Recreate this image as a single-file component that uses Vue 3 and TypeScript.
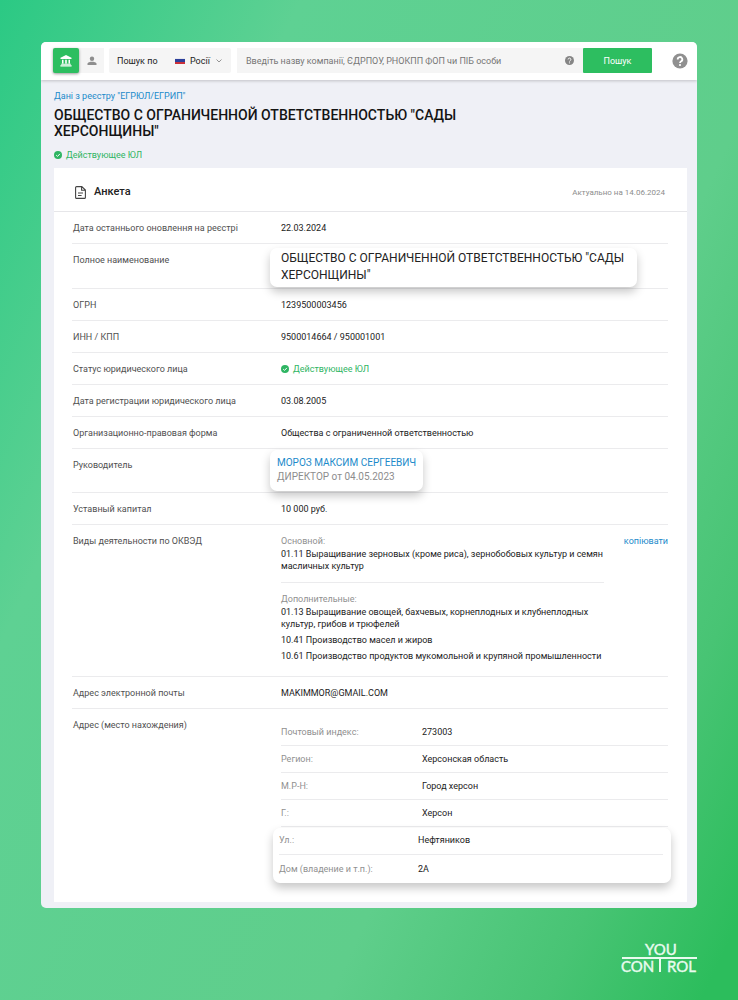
<script setup lang="ts">
import { ref } from 'vue'

interface Row {
  label: string
  value: string
  kind?: 'name' | 'status' | 'head'
}

const query = ref('')
const country = ref('Росії')

const companyName = 'ОБЩЕСТВО С ОГРАНИЧЕННОЙ ОТВЕТСТВЕННОСТЬЮ "САДЫ ХЕРСОНЩИНЫ"'

const rows: Row[] = [
  { label: 'Дата останнього оновлення на реєстрі', value: '22.03.2024' },
  { label: 'Полное наименование', value: companyName, kind: 'name' },
  { label: 'ОГРН', value: '1239500003456' },
  { label: 'ИНН / КПП', value: '9500014664 / 950001001' },
  { label: 'Статус юридического лица', value: 'Действующее ЮЛ', kind: 'status' },
  { label: 'Дата регистрации юридического лица', value: '03.08.2005' },
  { label: 'Организационно-правовая форма', value: 'Общества с ограниченной ответственностью' },
  { label: 'Руководитель', value: 'МОРОЗ МАКСИМ СЕРГЕЕВИЧ', kind: 'head' },
  { label: 'Уставный капитал', value: '10 000 руб.' },
]

const extraActivities: string[] = [
  '01.13 Выращивание овощей, бахчевых, корнеплодных и клубнеплодных культур, грибов и трюфелей',
  '10.41 Производство масел и жиров',
  '10.61 Производство продуктов мукомольной и крупяной промышленности',
]

const address: [string, string][] = [
  ['Почтовый индекс:', '273003'],
  ['Регион:', 'Херсонская область'],
  ['М.Р-Н:', 'Город херсон'],
  ['Г.:', 'Херсон'],
]

const street: [string, string][] = [
  ['Ул.:', 'Нефтяников'],
  ['Дом (владение и т.п.):', '2А'],
]
</script>

<template>
  <div class="page">
    <main class="window">
      <header class="topbar">
        <div class="modes">
          <button class="mode active" type="button" aria-label="Компанії">
            <svg width="12" height="12" viewBox="0 0 12 12" fill="currentColor">
              <path d="M6 0 11.500 2.800V4H.5V2.800zM2 4.800h1.500v3.600H2zM5.200 4.800h1.600v3.600H5.200zM8.500 4.800H10v3.600H8.500zM1.200 8.800h9.600v.9H1.200zM.4 10.300h11.200v1.300H.4z" />
            </svg>
          </button>
          <button class="mode" type="button" aria-label="Особи">
            <svg width="10" height="10" viewBox="0 0 10 10" fill="currentColor">
              <circle cx="5" cy="2.700" r="2.200" />
              <path d="M.5 9V7.700C.5 6.300 3.400 5.700 5 5.700s4.500.6 4.500 2V9z" />
            </svg>
          </button>
        </div>
        <div class="scope">
          <label for="country">Пошук по</label>
          <span class="flag" aria-hidden="true"></span>
          <select id="country" v-model="country">
            <option>Росії</option>
          </select>
          <svg width="6" height="4" viewBox="0 0 6 4" fill="none" stroke="#8a8a8a" stroke-width="0.900">
            <path d="M.5.5 3 3 5.500.5" />
          </svg>
        </div>
        <form class="search" @submit.prevent>
          <div class="field">
            <input
              v-model="query"
              type="text"
              aria-label="Пошук"
              placeholder="Введіть назву компанії, ЄДРПОУ, РНОКПП ФОП чи ПІБ особи"
            />
            <svg width="9" height="9" viewBox="0 0 16 16">
              <circle cx="8" cy="8" r="8" fill="#858585" />
              <path d="M5.500 6.200a2.500 2.500 0 1 1 3.700 2.200C8.300 8.900 8 9.300 8 10" fill="none" stroke="#f5f5f5" stroke-width="1.700" />
              <circle cx="8" cy="12.200" r="1.100" fill="#f5f5f5" />
            </svg>
          </div>
          <button class="submit" type="submit">Пошук</button>
        </form>
        <button class="help" type="button" aria-label="Довідка">
          <svg width="16" height="16" viewBox="0 0 16 16">
            <circle cx="8" cy="8" r="7.600" fill="#909090" />
            <path d="M5.700 6.400a2.300 2.300 0 1 1 3.500 1.900C8.300 8.900 8 9.200 8 10" fill="none" stroke="#fff" stroke-width="1.800" />
            <circle cx="8" cy="12" r="1.100" fill="#fff" />
          </svg>
        </button>
      </header>

      <section class="content">
        <a class="source" href="#">Дані з реєстру "ЕГРЮЛ/ЕГРИП"</a>
        <h1>{{ companyName }}</h1>
        <p class="status">
          <svg width="8" height="8" viewBox="0 0 8 8">
            <circle cx="4" cy="4" r="4" fill="#2fb563" />
            <path d="M2.200 4.100 3.500 5.400 5.900 2.900" fill="none" stroke="#fff" />
          </svg>
          Действующее ЮЛ
        </p>

        <article class="panel">
          <div class="panel-head">
            <svg width="11" height="13" viewBox="0 0 11 13" fill="none" stroke="#444" stroke-width="1.100">
              <path d="M1.600.6h5.200L10.400 4v7.400a1 1 0 0 1-1 1H1.600a1 1 0 0 1-1-1V1.600a1 1 0 0 1 1-1zM6.600.8v3.500h3.600M3 7h5M3 9.500h3.600" />
            </svg>
            <h2>Анкета</h2>
            <time datetime="2024-06-14">Актуально на 14.06.2024</time>
          </div>

          <dl class="facts">
            <div v-for="row in rows" :key="row.label" class="row">
              <dt>{{ row.label }}</dt>
              <dd v-if="row.kind === 'name'">
                <p class="card name-card">{{ row.value }}</p>
              </dd>
              <dd v-else-if="row.kind === 'status'" class="status">
                <svg width="8" height="8" viewBox="0 0 8 8">
                  <circle cx="4" cy="4" r="4" fill="#2fb563" />
                  <path d="M2.200 4.100 3.500 5.400 5.900 2.900" fill="none" stroke="#fff" />
                </svg>
                {{ row.value }}
              </dd>
              <dd v-else-if="row.kind === 'head'">
                <p class="card head-card">
                  <a href="#">{{ row.value }}</a>
                  <span>ДИРЕКТОР от 04.05.2023</span>
                </p>
              </dd>
              <dd v-else>{{ row.value }}</dd>
            </div>

            <div class="row">
              <dt>Виды деятельности по ОКВЭД</dt>
              <dd class="activities">
                <div class="groups">
                  <div class="group">
                    <h3>Основной:</h3>
                    <p>01.11 Выращивание зерновых (кроме риса), зернобобовых культур и семян масличных культур</p>
                  </div>
                  <div class="group">
                    <h3>Дополнительные:</h3>
                    <p v-for="item in extraActivities" :key="item">{{ item }}</p>
                  </div>
                </div>
                <button class="copy" type="button">копіювати</button>
              </dd>
            </div>

            <div class="row">
              <dt>Адрес электронной почты</dt>
              <dd>MAKIMMOR@GMAIL.COM</dd>
            </div>

            <div class="row last">
              <dt>Адрес (место нахождения)</dt>
              <dd class="address">
                <dl>
                  <div v-for="[key, value] in address" :key="key" class="part">
                    <dt>{{ key }}</dt>
                    <dd>{{ value }}</dd>
                  </div>
                </dl>
                <dl class="card street-card">
                  <div v-for="[key, value] in street" :key="key" class="part">
                    <dt>{{ key }}</dt>
                    <dd>{{ value }}</dd>
                  </div>
                </dl>
              </dd>
            </div>
          </dl>
        </article>
      </section>
    </main>

    <footer>
      <svg width="84" height="44" viewBox="0 0 84 44" role="img" aria-label="YouControl" fill="#e9fbef">
        <text x="28" y="21" class="logo-text">YOU</text>
        <rect x="5" y="23" width="75" height="2" />
        <text x="4" y="38" class="logo-text">CON</text>
        <rect x="42" y="23" width="2" height="15" />
        <text x="50" y="38" class="logo-text">ROL</text>
      </svg>
    </footer>
  </div>
</template>

<style>
body {
  margin: 0;
}
</style>

<style scoped>
.page {
  box-sizing: border-box;
  min-height: 100vh;
  padding: 42px 41px 22px 41px;
  background: linear-gradient(115deg, #2bc984 0%, #5ed193 25%, #5fce8b 66%, #48c474 84%, #2cbd5c 97%);
  font-family: Roboto, "Liberation Sans", sans-serif;
  font-size: 9px;
  line-height: 12px;
  color: #222;
}
h1, h2, h3, p, dl, dd {
  margin: 0;
}
button, input, select {
  margin: 0;
  padding: 0;
  border: 0;
  font: inherit;
  color: inherit;
  background: none;
}
a, .copy {
  color: #1b8aca;
  text-decoration: none;
}
.window {
  overflow: hidden;
  border-radius: 5px;
  background: #eff0f6;
}
.topbar {
  position: relative;
  display: flex;
  align-items: center;
  padding: 6px 9px 7px 12px;
  background: #fff;
  box-shadow: 0 1px 3px rgba(0, 0, 0, 0.2);
}
.modes {
  display: flex;
  margin-right: 5px;
  background: #f5f5f5;
}
.mode {
  display: grid;
  place-items: center;
  width: 25px;
  height: 25px;
  color: #8e8e8e;
}
.mode.active {
  width: 26px;
  border-radius: 2px;
  color: #fff;
  background: #2dbe60;
  box-shadow: 0 1px 3px rgba(0, 0, 0, 0.4);
}
.scope {
  display: flex;
  align-items: center;
  box-sizing: border-box;
  width: 122px;
  height: 25px;
  margin-right: 6px;
  padding: 0 9px 0 8px;
  border-radius: 2px;
  background: #f5f5f5;
}
.flag {
  width: 10px;
  height: 6px;
  margin: 0 5px 0 auto;
  background: linear-gradient(#e8e8ee 0 17%, #2b3f9a 17% 60%, #c9303a 60%);
}
select {
  width: 26px;
  appearance: none;
}
.search {
  display: flex;
  flex: 1;
}
.field {
  display: flex;
  flex: 1;
  align-items: center;
  padding: 0 9px;
  background: #f5f5f5;
}
input {
  flex: 1;
  min-width: 0;
  outline: 0;
}
input::placeholder {
  color: #757575;
  opacity: 1;
}
.submit {
  width: 69px;
  height: 25px;
  border-radius: 1px;
  color: #fff;
  background: #2dbe60;
}
.help {
  display: flex;
  margin-left: 20px;
}
.content {
  padding: 10px 10px 6px 13px;
}
.source {
  display: block;
}
h1 {
  max-width: 420px;
  margin-top: 5px;
  font-size: 14px;
  line-height: 16px;
  font-weight: 500;
  color: #141414;
}
.status {
  display: flex;
  align-items: center;
  gap: 4px;
  color: #2fb563;
}
.content > .status {
  margin-top: 10px;
}
.panel {
  margin-top: 7px;
  padding-bottom: 19px;
  background: #fff;
}
.panel-head {
  display: flex;
  align-items: center;
  padding: 15px 22px 10px 21px;
  border-bottom: 1px solid #e6e6e9;
}
h2 {
  flex: 1;
  margin-left: 8px;
  font-size: 11px;
  line-height: 18px;
  font-weight: 500;
}
time {
  padding-top: 2px;
  font-size: 8px;
  color: #8d8d8d;
}
.facts {
  padding: 0 19px 0 18px;
}
.row {
  display: grid;
  grid-template-columns: 209px 1fr;
  padding: 10px 0 9px;
  border-bottom: 1px solid #ebebed;
}
.row.last {
  border-bottom: 0;
  padding-bottom: 0;
}
dt {
  padding-left: 1px;
  color: #505050;
}
.card {
  position: relative;
  border-radius: 7px;
  background: #fff;
  box-shadow: 0 5px 10px rgba(0, 0, 0, 0.22);
}
.name-card {
  max-width: 345px;
  margin: -6px 0 -8px -11px;
  padding: 2px 11px 3px;
  font-size: 12px;
  line-height: 17px;
}
.head-card {
  display: flex;
  flex-direction: column;
  width: max-content;
  margin: -9px 0 -8px -11px;
  padding: 6px 7px 7px;
  font-size: 10px;
  line-height: 14px;
  color: #8d8d8d;
}
.activities {
  display: flex;
  justify-content: space-between;
  align-items: flex-start;
}
.groups {
  width: 323px;
}
.group {
  padding-bottom: 10px;
}
.group + .group {
  padding: 10px 0 5px;
  border-top: 1px solid #ebebed;
}
h3 {
  font-size: 9px;
  line-height: 13px;
  font-weight: 400;
  color: #909090;
}
.group p + p {
  margin-top: 4px;
}
.part {
  display: grid;
  grid-template-columns: 141px 1fr;
  padding: 7px 0;
  border-bottom: 1px solid #ebebed;
}
.address dt {
  padding: 0;
  color: #909090;
}
.street-card {
  margin: 1px -3px 0 -8px;
  padding: 0 8px 0 6px;
}
.street-card .part {
  grid-template-columns: 139px 1fr;
  padding: 6px 0 8px;
}
.street-card .part:last-child {
  padding: 8px 0;
  border-bottom: 0;
}
footer {
  display: flex;
  justify-content: flex-end;
  margin: 26px -4px 0 0;
}
.logo-text {
  font-family: Lato, sans-serif;
  font-size: 15px;
  stroke: #e9fbef;
  stroke-width: 0.4px;
}
</style>
